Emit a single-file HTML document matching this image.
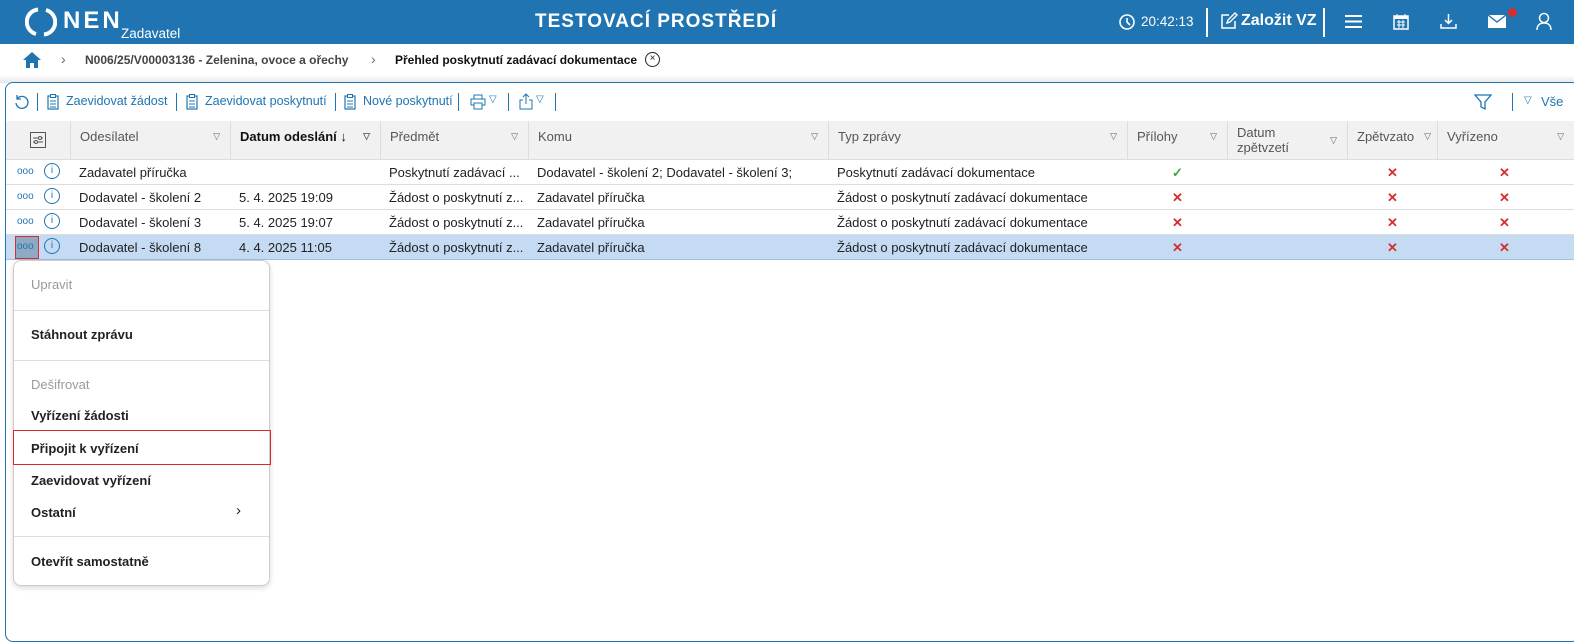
<!DOCTYPE html>
<html><head><meta charset="utf-8"><style>
*{box-sizing:border-box;margin:0;padding:0}
body{width:1574px;height:592px;overflow:hidden;background:#fff;font-family:"Liberation Sans",sans-serif;font-size:13px;color:#222;position:relative}
.abs{position:absolute}
.hdr{left:0;top:0;width:1574px;height:44px;background:#1f74b1;color:#fff}
.bc{top:44px;left:0;width:1574px;height:31px;background:#fff}
.band{top:75px;left:0;width:1574px;height:8px;background:linear-gradient(#fff,#e6e6e6)}
.panel{top:82px;left:5px;width:1575px;height:560px;border:1px solid #1f74b1;border-radius:8px;background:#fff}
.tb{color:#1f74b1;font-size:12.5px}
.th{top:121px;left:6px;width:1568px;height:39px;background:#f1f1f1;border-bottom:1px solid #ddd}
.col{position:absolute;top:0;height:39px;border-left:1px solid #ddd;color:#555;padding:8px 0 0 9px}
.col .f{position:absolute;right:10px;top:10px;font-size:9px;color:#666}
.row{position:absolute;left:6px;width:1568px;height:25px;border-bottom:1px solid #ddd}
.row span{position:absolute;top:5px}
.x{color:#d32f2f;font-weight:bold;font-size:13px}
.menu{left:13px;top:260px;width:257px;height:326px;background:#fff;border:1px solid #ccc;border-radius:8px;box-shadow:0 2px 6px rgba(0,0,0,.15)}
.mi{position:absolute;left:17px;font-size:13px;font-weight:bold;color:#222}
.mi.d{color:#9a9a9a;font-weight:normal}
.sep{position:absolute;left:0;width:255px;height:1px;background:#ddd}
.vs{position:absolute;top:0;width:1px;height:18px;background:#1f74b1}
</style></head><body>
<div class="abs hdr">
 <svg class="abs" style="left:25px;top:6px" width="32" height="32" viewBox="0 0 32 32"><path d="M13 3.5A12.5 12.5 0 0 0 11 28" stroke="#fff" stroke-width="4" fill="none"/><path d="M19 28.5A12.5 12.5 0 0 0 21 4" stroke="#fff" stroke-width="4" fill="none"/></svg>
 <div class="abs" style="left:63px;top:7px;font-size:24px;font-weight:bold;letter-spacing:3px">NEN</div>
 <div class="abs" style="left:121px;top:26px;font-size:13.5px">Zadavatel</div>
 <div class="abs" style="left:535px;top:11px;font-size:19px;font-weight:bold;letter-spacing:1px">TESTOVACÍ PROSTŘEDÍ</div>
 <svg class="abs" style="left:1118px;top:13px" width="18" height="18" viewBox="0 0 18 18"><circle cx="9" cy="9" r="7" stroke="#fff" stroke-width="1.6" fill="none"/><path d="M9 5v4l3 3" stroke="#fff" stroke-width="1.6" fill="none"/></svg>
 <div class="abs" style="left:1141px;top:14px;font-size:13.5px">20:42:13</div>
 <div class="abs" style="left:1206px;top:8px;width:2px;height:29px;background:#fff"></div>
 <svg class="abs" style="left:1220px;top:12px" width="18" height="18" viewBox="0 0 18 18"><path d="M9 3H2v13h13V9" stroke="#fff" stroke-width="1.5" fill="none"/><path d="M7 11l1-3 7-7 2 2-7 7z" stroke="#fff" stroke-width="1.4" fill="none"/></svg>
 <div class="abs" style="left:1241px;top:12px;font-size:16px;font-weight:bold">Založit VZ</div>
 <div class="abs" style="left:1323px;top:8px;width:2px;height:29px;background:#fff"></div>
 <svg class="abs" style="left:1345px;top:14px" width="17" height="15"><path d="M0 2h17M0 7.5h17M0 13h17" stroke="#fff" stroke-width="2"/></svg>
 <svg class="abs" style="left:1393px;top:13px" width="16" height="17" viewBox="0 0 16 17"><rect x="1" y="3" width="14" height="13" fill="none" stroke="#fff" stroke-width="1.5"/><rect x="1" y="3" width="14" height="3" fill="#fff"/><path d="M4 1v3M12 1v3M4 9h8M4 12h8M6 7v8M10 7v8" stroke="#fff"/></svg>
 <svg class="abs" style="left:1440px;top:13px" width="17" height="17" viewBox="0 0 17 17"><path d="M8.5 1v9M5 7l3.5 3.5L12 7M1 11v4h15v-4" stroke="#fff" stroke-width="1.5" fill="none"/></svg>
 <svg class="abs" style="left:1488px;top:15px" width="18" height="13" viewBox="0 0 18 13"><rect width="18" height="13" fill="#fff"/><path d="M0 0l9 7 9-7" stroke="#1f74b1" stroke-width="1.3" fill="none"/></svg>
 <div class="abs" style="left:1508px;top:8px;width:9px;height:9px;border-radius:50%;background:#d32f2f"></div>
 <svg class="abs" style="left:1536px;top:12px" width="16" height="19" viewBox="0 0 16 19"><circle cx="8" cy="6" r="4.5" stroke="#fff" stroke-width="1.5" fill="none"/><path d="M1 18c0-5 3-7 7-7s7 2 7 7" stroke="#fff" stroke-width="1.5" fill="none"/></svg>
</div>
<div class="abs bc">
 <svg class="abs" style="left:23px;top:8px" width="18" height="16" viewBox="0 0 18 16"><path d="M9 0L0 8h3v8h4v-5h4v5h4V8h3z" fill="#1f74b1"/></svg>
 <div class="abs" style="left:61px;top:7px;color:#666;font-size:14px">›</div>
 <div class="abs" style="left:85px;top:9px;color:#444;font-weight:bold;font-size:12px">N006/25/V00003136 - Zelenina, ovoce a ořechy</div>
 <div class="abs" style="left:371px;top:7px;color:#666;font-size:14px">›</div>
 <div class="abs" style="left:395px;top:9px;color:#111;font-weight:bold;font-size:12px">Přehled poskytnutí zadávací dokumentace</div>
 <div class="abs" style="left:645px;top:8px;width:15px;height:15px;border:1.3px solid #222;border-radius:50%;font-size:10px;text-align:center;line-height:12px">×</div>
</div>
<div class="abs band"></div>
<div class="abs panel"></div>
<div class="abs tb" style="left:14px;top:93px;width:1560px;height:18px">
 <svg class="abs" style="left:0;top:1px" width="16" height="16" viewBox="0 0 16 16"><path d="M3 5a6 6 0 1 1-1 4M3 1v4h4" stroke="#1f74b1" stroke-width="1.3" fill="none"/></svg>
 <div class="vs" style="left:23px"></div>
 <div class="abs" style="left:52px;top:1px">Zaevidovat žádost</div>
 <div class="vs" style="left:162px"></div>
 <div class="abs" style="left:191px;top:1px">Zaevidovat poskytnutí</div>
 <div class="vs" style="left:321px"></div>
 <div class="abs" style="left:349px;top:1px">Nové poskytnutí</div>
 <div class="vs" style="left:444px"></div>
 <svg class="abs" style="left:456px;top:1px" width="16" height="16" viewBox="0 0 16 16"><rect x="4" y="1" width="8" height="4" fill="none" stroke="#1f74b1"/><rect x="1" y="5" width="14" height="6" fill="none" stroke="#1f74b1"/><rect x="4" y="9" width="8" height="6" fill="#fff" stroke="#1f74b1"/></svg>
 <div class="abs" style="left:475px;top:1px;font-size:10px">▽</div>
 <div class="vs" style="left:494px"></div>
 <svg class="abs" style="left:505px;top:0" width="14" height="17" viewBox="0 0 14 17"><path d="M7 1v10M4 4l3-3 3 3M4 7H1v9h12V7h-3" stroke="#1f74b1" fill="none"/></svg>
 <div class="abs" style="left:522px;top:1px;font-size:10px">▽</div>
 <div class="vs" style="left:541px"></div>
 <svg class="abs" style="left:1460px;top:0" width="18" height="18" viewBox="0 0 18 18"><path d="M1 2h16l-6 7v7l-4-2V9z" stroke="#1f74b1" stroke-width="1.3" fill="none"/></svg>
 <div class="vs" style="left:1498px"></div>
 <div class="abs" style="left:1510px;top:2px;font-size:10px">▽</div>
 <div class="abs" style="left:1527px;top:1px;font-size:13px">Vše</div>
</div>
<svg class="abs" style="left:47px;top:94px" width="12" height="16" viewBox="0 0 12 16"><rect x="1" y="2" width="10" height="13" stroke="#1f74b1" fill="none" stroke-width="1.2"/><rect x="3.5" y="0.5" width="5" height="3" fill="#fff" stroke="#1f74b1"/><path d="M3 7h6M3 10h6M3 13h6" stroke="#1f74b1"/></svg>
<svg class="abs" style="left:186px;top:94px" width="12" height="16" viewBox="0 0 12 16"><rect x="1" y="2" width="10" height="13" stroke="#1f74b1" fill="none" stroke-width="1.2"/><rect x="3.5" y="0.5" width="5" height="3" fill="#fff" stroke="#1f74b1"/><path d="M3 7h6M3 10h6M3 13h6" stroke="#1f74b1"/></svg>
<svg class="abs" style="left:344px;top:94px" width="12" height="16" viewBox="0 0 12 16"><rect x="1" y="2" width="10" height="13" stroke="#1f74b1" fill="none" stroke-width="1.2"/><rect x="3.5" y="0.5" width="5" height="3" fill="#fff" stroke="#1f74b1"/><path d="M3 7h6M3 10h6M3 13h6" stroke="#1f74b1"/></svg>
<div class="abs th">
 <div class="col" style="left:0;width:64px;border-left:none"><svg style="position:absolute;left:24px;top:11px" width="16" height="16" viewBox="0 0 16 16"><rect x=".5" y=".5" width="15" height="15" fill="none" stroke="#555"/><path d="M3 6h10M3 10h10" stroke="#555"/><circle cx="10" cy="6" r="1.5" fill="#fff" stroke="#555"/><circle cx="6" cy="10" r="1.5" fill="#fff" stroke="#555"/></svg></div>
 <div class="col" style="left:64px;width:160px">Odesílatel<span class="f">▽</span></div>
 <div class="col" style="left:224px;width:150px;color:#111;font-weight:bold">Datum odeslání ↓<span class="f">▽</span></div>
 <div class="col" style="left:374px;width:148px">Předmět<span class="f">▽</span></div>
 <div class="col" style="left:522px;width:300px">Komu<span class="f">▽</span></div>
 <div class="col" style="left:822px;width:299px">Typ zprávy<span class="f">▽</span></div>
 <div class="col" style="left:1121px;width:100px">Přílohy<span class="f">▽</span></div>
 <div class="col" style="left:1221px;width:120px;padding-top:4px;line-height:15px">Datum<br>zpětvzetí<span class="f" style="top:12px">▽</span></div>
 <div class="col" style="left:1341px;width:90px">Zpětvzato<span class="f" style="right:6px">▽</span></div>
 <div class="col" style="left:1431px;width:137px">Vyřízeno<span class="f">▽</span></div>
</div>
<div class="row" style="top:160px"><span style="left:11px;color:#1f74b1;font-size:10px;top:6px">ooo</span><span style="left:38px;top:3px;width:16px;height:16px;border:1.3px solid #1f74b1;border-radius:50%;color:#1f74b1;font-size:10px;text-align:center;line-height:13px">i</span><span style="left:73px">Zadavatel příručka</span><span style="left:383px">Poskytnutí zadávací ...</span><span style="left:531px">Dodavatel - školení 2; Dodavatel - školení 3;</span><span style="left:831px">Poskytnutí zadávací dokumentace</span><span style="left:1166px;color:#3aa53a;font-weight:bold">✓</span><span class="x" style="left:1381px">✕</span><span class="x" style="left:1493px">✕</span></div>
<div class="row" style="top:185px"><span style="left:11px;color:#1f74b1;font-size:10px;top:6px">ooo</span><span style="left:38px;top:3px;width:16px;height:16px;border:1.3px solid #1f74b1;border-radius:50%;color:#1f74b1;font-size:10px;text-align:center;line-height:13px">i</span><span style="left:73px">Dodavatel - školení 2</span><span style="left:233px">5. 4. 2025 19:09</span><span style="left:383px">Žádost o poskytnutí z...</span><span style="left:531px">Zadavatel příručka</span><span style="left:831px">Žádost o poskytnutí zadávací dokumentace</span><span class="x" style="left:1166px">✕</span><span class="x" style="left:1381px">✕</span><span class="x" style="left:1493px">✕</span></div>
<div class="row" style="top:210px"><span style="left:11px;color:#1f74b1;font-size:10px;top:6px">ooo</span><span style="left:38px;top:3px;width:16px;height:16px;border:1.3px solid #1f74b1;border-radius:50%;color:#1f74b1;font-size:10px;text-align:center;line-height:13px">i</span><span style="left:73px">Dodavatel - školení 3</span><span style="left:233px">5. 4. 2025 19:07</span><span style="left:383px">Žádost o poskytnutí z...</span><span style="left:531px">Zadavatel příručka</span><span style="left:831px">Žádost o poskytnutí zadávací dokumentace</span><span class="x" style="left:1166px">✕</span><span class="x" style="left:1381px">✕</span><span class="x" style="left:1493px">✕</span></div>
<div class="row" style="top:235px;background:#c5dbf3;border-bottom:1px solid #9fc0e6"><span style="left:9px;top:1px;width:24px;height:23px;background:#8fa9c4;border:1px solid #d32f2f"></span><span style="left:11px;color:#1f74b1;font-size:10px;top:6px">ooo</span><span style="left:38px;top:3px;width:16px;height:16px;border:1.3px solid #1f74b1;border-radius:50%;color:#1f74b1;font-size:10px;text-align:center;line-height:13px">i</span><span style="left:73px">Dodavatel - školení 8</span><span style="left:233px">4. 4. 2025 11:05</span><span style="left:383px">Žádost o poskytnutí z...</span><span style="left:531px">Zadavatel příručka</span><span style="left:831px">Žádost o poskytnutí zadávací dokumentace</span><span class="x" style="left:1166px">✕</span><span class="x" style="left:1381px">✕</span><span class="x" style="left:1493px">✕</span></div>
<div class="abs menu">
 <div class="mi d" style="top:16px">Upravit</div>
 <div class="sep" style="top:49px"></div>
 <div class="mi" style="top:66px">Stáhnout zprávu</div>
 <div class="sep" style="top:99px"></div>
 <div class="mi d" style="top:116px">Dešifrovat</div>
 <div class="mi" style="top:147px">Vyřízení žádosti</div>
 <div style="position:absolute;left:-1px;top:169px;width:258px;height:35px;border:1px solid #e0242a"></div>
 <div class="mi" style="top:180px">Připojit k vyřízení</div>
 <div class="mi" style="top:212px">Zaevidovat vyřízení</div>
 <div class="mi" style="top:244px">Ostatní</div>
 <div style="position:absolute;left:222px;top:241px;font-size:15px">›</div>
 <div class="sep" style="top:275px"></div>
 <div class="mi" style="top:293px">Otevřít samostatně</div>
</div>
</body></html>
